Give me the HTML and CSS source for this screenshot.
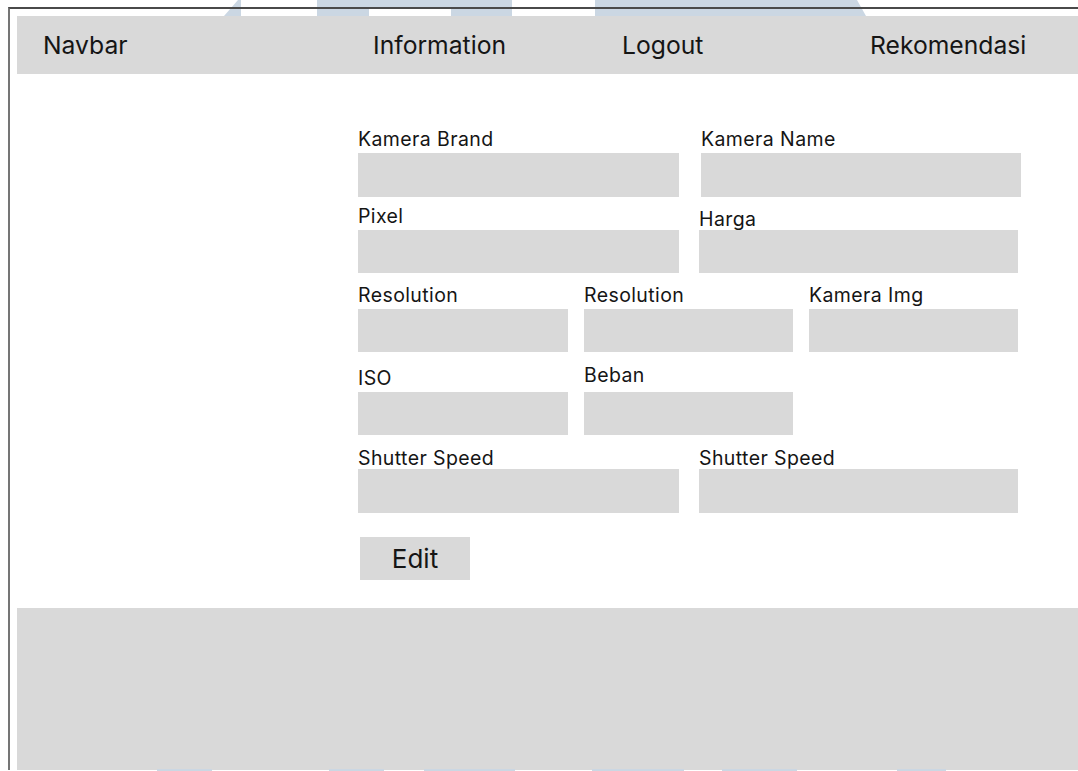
FILE: index.html
```html
<!DOCTYPE html>
<html lang="id">
<head>
<meta charset="utf-8">
<title>Edit Kamera</title>
<link rel="stylesheet" href="styles.css">
</head>
<body>
<svg class="mark mark-top" width="1078" height="16" viewBox="0 0 1078 16" aria-hidden="true">
  <polygon points="238,0 241,0 241,16 224,16"/>
  <path d="M317 0H512V16H451V8H369V16H317Z"/>
  <polygon points="595,0 857,0 866,16 595,16"/>
</svg>
<div class="frame">
  <nav class="navbar">
    <span class="nav-brand">Navbar</span>
    <a class="nav-link">Information</a>
    <a class="nav-link">Logout</a>
    <a class="nav-link">Rekomendasi</a>
  </nav>
  <main class="main">
    <form class="form">
      <div class="row row-wide tall">
        <label class="field"><span class="label">Kamera Brand</span><span class="input"></span></label>
        <label class="field"><span class="label">Kamera Name</span><span class="input"></span></label>
      </div>
      <div class="row row-half r2">
        <label class="field"><span class="label">Pixel</span><span class="input"></span></label>
        <label class="field field-low"><span class="label">Harga</span><span class="input"></span></label>
      </div>
      <div class="row row-third r3">
        <label class="field"><span class="label">Resolution</span><span class="input"></span></label>
        <label class="field"><span class="label">Resolution</span><span class="input"></span></label>
        <label class="field"><span class="label">Kamera Img</span><span class="input"></span></label>
      </div>
      <div class="row row-third r4">
        <label class="field"><span class="label">ISO</span><span class="input"></span></label>
        <label class="field field-high"><span class="label">Beban</span><span class="input"></span></label>
      </div>
      <div class="row row-half r5 tight tall">
        <label class="field"><span class="label">Shutter Speed</span><span class="input"></span></label>
        <label class="field"><span class="label">Shutter Speed</span><span class="input"></span></label>
      </div>
      <button type="button" class="btn">Edit</button>
    </form>
  </main>
  <footer class="footer"></footer>
</div>
<svg class="mark mark-bottom" width="1078" height="3" viewBox="0 0 1078 3" aria-hidden="true">
  <rect x="157" y="1" width="55" height="2"/>
  <rect x="329" y="1" width="55" height="2"/>
  <rect x="424" y="1" width="91" height="2"/>
  <rect x="592" y="1" width="92" height="2"/>
  <rect x="722" y="1" width="75" height="2"/>
  <rect x="897" y="1" width="49" height="2"/>
</svg>
</body>
</html>
```
FILE: styles.css
```css
html {
  margin: 0;
  padding: 0;
  background: #ffffff;
  overflow: hidden;
}

body {
  margin: 0;
  padding: 0;
  position: relative;
  width: 1078px;
  height: 771px;
  font-family: Inter, "Noto Sans", sans-serif;
  color: #151515;
}

/* faint background watermark shapes */
.mark {
  position: absolute;
  left: 0;
  fill: #cbd7e3;
}
.mark-top {
  top: 0;
  z-index: -1;
}
.mark-bottom {
  bottom: 0;
  z-index: 1;
}

.frame {
  margin: 7px 0 0 8px;
  border-top: 2px solid #4a4a4a;
  border-left: 2px solid #757575;
  padding: 7px 0 0 7px;
}

/* top navigation */
.navbar {
  height: 58px;
  background: #d9d9d9;
  display: grid;
  grid-template-columns: 330px 249px 248px auto;
  align-items: center;
  padding-left: 26px;
  font-size: 24.7px;
}
.nav-link {
  color: inherit;
  text-decoration: none;
}

/* form area */
.main {
  padding: 54px 0 28px 341px;
}
.form {
  display: flex;
  flex-direction: column;
  align-items: flex-start;
}

.row {
  display: grid;
}
.row-wide {
  grid-template-columns: 321px 320px;
  column-gap: 22px;
}
.row-half {
  grid-template-columns: 321px 319px;
  column-gap: 20px;
}
.row-third {
  grid-template-columns: 210px 209px 209px;
  column-gap: 16px;
}
.r2 { margin-top: 8px; }
.r3 { margin-top: 11px; }
.r4 { margin-top: 15px; }
.r5 { margin-top: 12px; }

.field {
  display: flex;
  flex-direction: column;
}
.label {
  display: block;
  height: 22px;
  line-height: 22px;
  font-size: 19.5px;
  letter-spacing: 0.4px;
  white-space: nowrap;
}
.input {
  display: block;
  height: 43px;
  margin-top: 3px;
  background: #d9d9d9;
}
.tall .input {
  height: 44px;
}
.tight .input {
  margin-top: 0;
}
.field-low .label {
  transform: translateY(3px);
}
.field-high .label {
  transform: translateY(-3px);
}

.btn {
  margin: 24px 0 0 2px;
  width: 110px;
  height: 43px;
  border: 0;
  padding: 0;
  background: #d9d9d9;
  font-family: inherit;
  font-size: 26px;
  color: #151515;
}

.footer {
  height: 162px;
  background: #d9d9d9;
}
```
